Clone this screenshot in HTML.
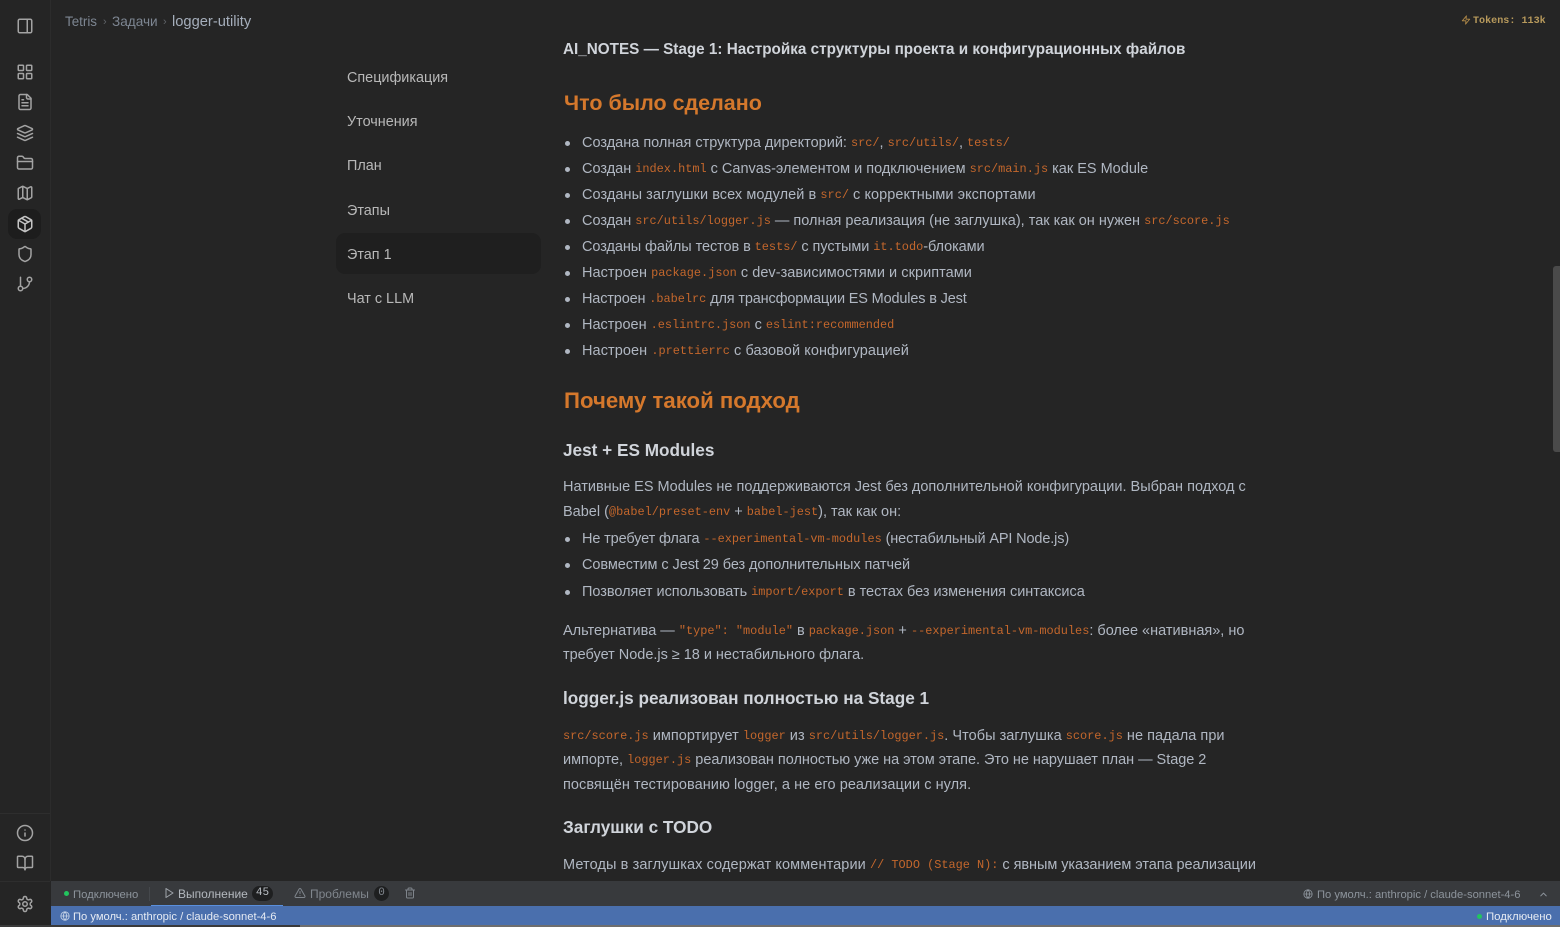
<!DOCTYPE html>
<html lang="ru"><head><meta charset="utf-8"><title>logger-utility</title>
<style>
html,body{margin:0;padding:0;width:1560px;height:927px;overflow:hidden;background:#252525}
body{position:relative;font-family:"Liberation Sans","Noto Sans CJK SC",sans-serif;color:#b0b7c2;font-size:14.5px}
.l,.a{position:absolute;white-space:nowrap;line-height:20px}
.l{left:563px}
.li{left:582px}
.li:before{content:"";position:absolute;left:-17px;top:8px;width:5px;height:5px;border-radius:50%;background:#b0b7c2}
code{font-family:"Liberation Mono",monospace;font-size:11.9px;color:#c4672c;position:relative;top:-1px;letter-spacing:0}
h2,h3,h4{margin:0;font-weight:700;position:absolute;left:563px;white-space:nowrap}
h2{color:#d5782c;line-height:28px}
h3{font-size:17.2px;color:#d0d4da;line-height:24px}
.nav{left:347px;color:#b8b8b8;font-size:14.4px}
svg.i{position:absolute;fill:none;stroke:#a3a3a3;stroke-width:2;stroke-linecap:round;stroke-linejoin:round}
.box{position:absolute}
</style></head><body>

<div class="box" style="left:50px;top:0;width:1px;height:881px;background:#2c2c2c"></div>
<div class="box" style="left:0;top:813px;width:50px;height:1px;background:#2e2e2e"></div>
<div class="box" style="left:0;top:881px;width:50px;height:1px;background:#2e2e2e"></div>
<div class="box" style="left:8px;top:209px;width:33px;height:30px;border-radius:9px;background:#1d1d1d"></div>

<svg class="i" style="left:16px;top:17px" width="18" height="18" viewBox="0 0 24 24"><rect x="3" y="3" width="18" height="18" rx="2"/><path d="M15 3v18"/></svg>
<svg class="i" style="left:16px;top:63px" width="18" height="18" viewBox="0 0 24 24"><rect x="3" y="3" width="7" height="7" rx="1"/><rect x="14" y="3" width="7" height="7" rx="1"/><rect x="14" y="14" width="7" height="7" rx="1"/><rect x="3" y="14" width="7" height="7" rx="1"/></svg>
<svg class="i" style="left:16px;top:93px" width="18" height="18" viewBox="0 0 24 24"><path d="M15 2H6a2 2 0 0 0-2 2v16a2 2 0 0 0 2 2h12a2 2 0 0 0 2-2V7Z"/><path d="M14 2v4a2 2 0 0 0 2 2h4"/><path d="M10 9H8"/><path d="M16 13H8"/><path d="M16 17H8"/></svg>
<svg class="i" style="left:16px;top:124px" width="18" height="18" viewBox="0 0 24 24"><path d="m12.83 2.18a2 2 0 0 0-1.66 0L2.6 6.08a1 1 0 0 0 0 1.83l8.58 3.91a2 2 0 0 0 1.66 0l8.58-3.9a1 1 0 0 0 0-1.83Z"/><path d="m22 17.65-9.17 4.16a2 2 0 0 1-1.66 0L2 17.65"/><path d="m22 12.65-9.17 4.16a2 2 0 0 1-1.66 0L2 12.65"/></svg>
<svg class="i" style="left:16px;top:154px" width="18" height="18" viewBox="0 0 24 24"><path d="M20 20a2 2 0 0 0 2-2V8a2 2 0 0 0-2-2h-7.9a2 2 0 0 1-1.69-.9L9.6 3.9A2 2 0 0 0 7.93 3H4a2 2 0 0 0-2 2v13a2 2 0 0 0 2 2Z"/><path d="M2 10h20"/></svg>
<svg class="i" style="left:16px;top:184px" width="18" height="18" viewBox="0 0 24 24"><path d="M14.106 5.553a2 2 0 0 0 1.788 0l3.659-1.83A1 1 0 0 1 21 4.619v12.764a1 1 0 0 1-.553.894l-4.553 2.277a2 2 0 0 1-1.788 0l-4.212-2.106a2 2 0 0 0-1.788 0l-3.659 1.83A1 1 0 0 1 3 19.381V6.618a1 1 0 0 1 .553-.894l4.553-2.277a2 2 0 0 1 1.788 0z"/><path d="M15 5.764v15"/><path d="M9 3.236v15"/></svg>
<svg class="i" style="left:16px;top:215px;stroke:#c4c4c4" width="18" height="18" viewBox="0 0 24 24"><path d="M11 21.73a2 2 0 0 0 2 0l7-4A2 2 0 0 0 21 16V8a2 2 0 0 0-1-1.73l-7-4a2 2 0 0 0-2 0l-7 4A2 2 0 0 0 3 8v8a2 2 0 0 0 1 1.73z"/><path d="M12 22V12"/><path d="m3.3 7 8.7 5 8.7-5"/><path d="m7.5 4.27 9 5.15"/></svg>
<svg class="i" style="left:16px;top:245px" width="18" height="18" viewBox="0 0 24 24"><path d="M20 13c0 5-3.5 7.5-7.66 8.95a1 1 0 0 1-.67-.01C7.5 20.5 4 18 4 13V6a1 1 0 0 1 1-1c2 0 4.5-1.2 6.24-2.72a1.17 1.17 0 0 1 1.52 0C14.51 3.81 17 5 19 5a1 1 0 0 1 1 1z"/></svg>
<svg class="i" style="left:16px;top:275px" width="18" height="18" viewBox="0 0 24 24"><path d="M6 3v12"/><circle cx="18" cy="6" r="3"/><circle cx="6" cy="18" r="3"/><path d="M18 9a9 9 0 0 1-9 9"/></svg>
<svg class="i" style="left:16px;top:824px" width="18" height="18" viewBox="0 0 24 24"><circle cx="12" cy="12" r="10"/><path d="M12 16v-4"/><path d="M12 8h.01"/></svg>
<svg class="i" style="left:16px;top:854px" width="18" height="18" viewBox="0 0 24 24"><path d="M12 7v14"/><path d="M3 18a1 1 0 0 1-1-1V4a1 1 0 0 1 1-1h5a4 4 0 0 1 4 4 4 4 0 0 1 4-4h5a1 1 0 0 1 1 1v13a1 1 0 0 1-1 1h-6a3 3 0 0 0-3 3 3 3 0 0 0-3-3z"/></svg>
<svg class="i" style="left:16px;top:895px" width="18" height="18" viewBox="0 0 24 24"><path d="M12.22 2h-.44a2 2 0 0 0-2 2v.18a2 2 0 0 1-1 1.73l-.43.25a2 2 0 0 1-2 0l-.15-.08a2 2 0 0 0-2.73.73l-.22.38a2 2 0 0 0 .73 2.73l.15.1a2 2 0 0 1 1 1.72v.51a2 2 0 0 1-1 1.74l-.15.09a2 2 0 0 0-.73 2.73l.22.38a2 2 0 0 0 2.73.73l.15-.08a2 2 0 0 1 2 0l.43.25a2 2 0 0 1 1 1.73V20a2 2 0 0 0 2 2h.44a2 2 0 0 0 2-2v-.18a2 2 0 0 1 1-1.73l.43-.25a2 2 0 0 1 2 0l.15.08a2 2 0 0 0 2.73-.73l.22-.39a2 2 0 0 0-.73-2.73l-.15-.08a2 2 0 0 1-1-1.74v-.5a2 2 0 0 1 1-1.74l.15-.09a2 2 0 0 0 .73-2.73l-.22-.38a2 2 0 0 0-2.73-.73l-.15.08a2 2 0 0 1-2 0l-.43-.25a2 2 0 0 1-1-1.73V4a2 2 0 0 0-2-2z"/><circle cx="12" cy="12" r="3"/></svg>

<div class="a" style="left:65px;top:12px;color:#7d8692;font-size:13.4px">Tetris</div>
<div class="a" style="left:103px;top:12px;color:#5f6368;font-size:11px">›</div>
<div class="a" style="left:112px;top:12px;color:#7d8692;font-size:13.6px">Задачи</div>
<div class="a" style="left:163px;top:12px;color:#5f6368;font-size:11px">›</div>
<div class="a" style="left:172px;top:12px;color:#a5aebb;font-size:14.7px">logger-utility</div>

<svg class="i" style="left:1461px;top:15px;stroke:#b98f4a" width="10" height="10" viewBox="0 0 24 24"><path d="M13 2 3 14h9l-1 8 10-12h-9l1-8z"/></svg>
<div class="a" style="left:1473px;top:12px;font-family:'Liberation Mono',monospace;font-size:10.1px;font-weight:700;color:#b89a5c">Tokens: 113k</div>

<div class="a nav" style="top:68px">Спецификация</div>
<div class="a nav" style="top:112px">Уточнения</div>
<div class="a nav" style="top:156px">План</div>
<div class="a nav" style="top:201px">Этапы</div>
<div class="box" style="left:336px;top:233px;width:205px;height:41px;border-radius:9px;background:#1f1f1f"></div>
<div class="a nav" style="top:245px">Этап 1</div>
<div class="a nav" style="top:289px">Чат с LLM</div>

<div class="l" style="top:40px;font-weight:700;font-size:15.27px;color:#d0d4da">AI_NOTES — Stage 1: Настройка структуры проекта и конфигурационных файлов</div>

<h2 style="top:89px;font-size:21.5px;left:564px">Что было сделано</h2>
<div class="l li" style="top:133px">Создана полная структура директорий: <code>src/</code>, <code>src/utils/</code>, <code>tests/</code></div>
<div class="l li" style="top:159px">Создан <code>index.html</code> с Canvas-элементом и подключением <code>src/main.js</code> как ES Module</div>
<div class="l li" style="top:185px;letter-spacing:.06px">Созданы заглушки всех модулей в <code>src/</code> с корректными экспортами</div>
<div class="l li" style="top:211px">Создан <code>src/utils/logger.js</code> — полная реализация (не заглушка), так как он нужен <code>src/score.js</code></div>
<div class="l li" style="top:237px;letter-spacing:-.08px">Созданы файлы тестов в <code>tests/</code> с пустыми <code>it.todo</code>-блоками</div>
<div class="l li" style="top:263px;letter-spacing:.05px">Настроен <code>package.json</code> с dev-зависимостями и скриптами</div>
<div class="l li" style="top:289px;letter-spacing:-.16px">Настроен <code>.babelrc</code> для трансформации ES Modules в Jest</div>
<div class="l li" style="top:315px">Настроен <code>.eslintrc.json</code> с <code>eslint:recommended</code></div>
<div class="l li" style="top:341px;letter-spacing:.08px">Настроен <code>.prettierrc</code> с базовой конфигурацией</div>

<h2 style="top:387px;font-size:22.2px;left:564px">Почему такой подход</h2>
<h3 style="top:438px">Jest + ES Modules</h3>
<div class="l" style="top:477px">Нативные ES Modules не поддерживаются Jest без дополнительной конфигурации. Выбран подход с</div>
<div class="l" style="top:502px">Babel (<code>@babel/preset-env</code> + <code>babel-jest</code>), так как он:</div>
<div class="l li" style="top:529px;letter-spacing:-.14px">Не требует флага <code>--experimental-vm-modules</code> (нестабильный API Node.js)</div>
<div class="l li" style="top:555px;letter-spacing:-.07px">Совместим с Jest 29 без дополнительных патчей</div>
<div class="l li" style="top:582px;letter-spacing:-.03px">Позволяет использовать <code>import/export</code> в тестах без изменения синтаксиса</div>
<div class="l" style="top:621px">Альтернатива — <code>"type": "module"</code> в <code>package.json</code> + <code>--experimental-vm-modules</code>: более «нативная», но</div>
<div class="l" style="top:645px;letter-spacing:-.02px">требует Node.js ≥ 18 и нестабильного флага.</div>
<h3 style="top:686px">logger.js реализован полностью на Stage 1</h3>
<div class="l" style="top:726px;letter-spacing:.04px"><code>src/score.js</code> импортирует <code>logger</code> из <code>src/utils/logger.js</code>. Чтобы заглушка <code>score.js</code> не падала при</div>
<div class="l" style="top:750px;letter-spacing:-.03px">импорте, <code>logger.js</code> реализован полностью уже на этом этапе. Это не нарушает план — Stage 2</div>
<div class="l" style="top:775px;letter-spacing:.05px">посвящён тестированию logger, а не его реализации с нуля.</div>
<h3 style="top:815px">Заглушки с TODO</h3>
<div class="l" style="top:855px"><span style="letter-spacing:.1px">Методы в заглушках содержат комментарии </span><code>// TODO (Stage N):</code><span style="letter-spacing:-.06px"> с явным указанием этапа реализации</span></div>

<div class="box" style="left:1553px;top:266px;width:7px;height:186px;border-radius:3px 0 0 3px;background:#4a4a4a"></div>

<div class="box" style="left:51px;top:881px;width:1509px;height:25px;background:#383a3d"></div>
<div class="box" style="left:64px;top:891px;width:5px;height:5px;border-radius:50%;background:#22c55e"></div>
<div class="a" style="left:73px;top:885px;font-size:11.3px;color:#8d949c">Подключено</div>
<div class="box" style="left:149px;top:887px;width:1px;height:14px;background:#45484c"></div>
<svg class="i" style="left:163px;top:887px;stroke:#a0a5ab" width="12" height="12" viewBox="0 0 24 24"><polygon points="6 3 20 12 6 21 6 3"/></svg>
<div class="a" style="left:178px;top:884px;font-size:12px;color:#b4b9bf">Выполнение</div>
<div class="a" style="left:252px;top:886px;width:21px;height:15px;line-height:15px;border-radius:8px;background:#1e1f20;text-align:center;font-family:'Liberation Mono',monospace;font-size:11px;color:#b9bec4">45</div>
<div class="box" style="left:151px;top:905px;width:132px;height:1px;background:#5a8fdc"></div>
<svg class="i" style="left:294px;top:887px;stroke:#7f858c" width="12" height="12" viewBox="0 0 24 24"><path d="m21.73 18-8-14a2 2 0 0 0-3.48 0l-8 14A2 2 0 0 0 4 21h16a2 2 0 0 0 1.73-3"/><path d="M12 9v4"/><path d="M12 17h.01"/></svg>
<div class="a" style="left:310px;top:884px;font-size:12px;color:#80868d">Проблемы</div>
<div class="a" style="left:374px;top:886px;width:15px;height:15px;line-height:15px;border-radius:8px;background:#1e1f20;text-align:center;font-family:'Liberation Mono',monospace;font-size:11px;color:#80868d">0</div>
<svg class="i" style="left:404px;top:887px;stroke:#7f858c" width="12" height="12" viewBox="0 0 24 24"><path d="M3 6h18"/><path d="M19 6v14c0 1-1 2-2 2H7c-1 0-2-1-2-2V6"/><path d="M8 6V4c0-1 1-2 2-2h4c1 0 2 1 2 2v2"/><path d="M10 11v6"/><path d="M14 11v6"/></svg>
<svg class="i" style="left:1303px;top:889px;stroke:#8d949c" width="10" height="10" viewBox="0 0 24 24"><circle cx="12" cy="12" r="10"/><path d="M2 12h20M12 2a15 15 0 0 1 0 20M12 2a15 15 0 0 0 0 20"/></svg>
<div class="a" style="left:1317px;top:885px;font-size:11.2px;color:#8d949c">По умолч.: anthropic / claude-sonnet-4-6</div>
<svg class="i" style="left:1538px;top:889px;stroke:#8d949c" width="11" height="11" viewBox="0 0 24 24"><path d="m18 15-6-6-6 6"/></svg>

<div class="box" style="left:51px;top:906px;width:1509px;height:19px;background:#4a6fad"></div>
<svg class="i" style="left:60px;top:911px;stroke:#c5d2e6" width="10" height="10" viewBox="0 0 24 24"><circle cx="12" cy="12" r="10"/><path d="M2 12h20M12 2a15 15 0 0 1 0 20M12 2a15 15 0 0 0 0 20"/></svg>
<div class="a" style="left:73px;top:907px;font-size:11.2px;color:#e6ebf3">По умолч.: anthropic / claude-sonnet-4-6</div>
<div class="box" style="left:1477px;top:914px;width:5px;height:5px;border-radius:50%;background:#22c55e"></div>
<div class="a" style="left:1486px;top:907px;font-size:11.4px;color:#e6ebf3">Подключено</div>
<div class="box" style="left:0;top:925px;width:1560px;height:2px;background:#6e6e6e"></div>
<div class="box" style="left:0;top:925px;width:300px;height:2px;background:#3a3a3a"></div>
</body></html>
